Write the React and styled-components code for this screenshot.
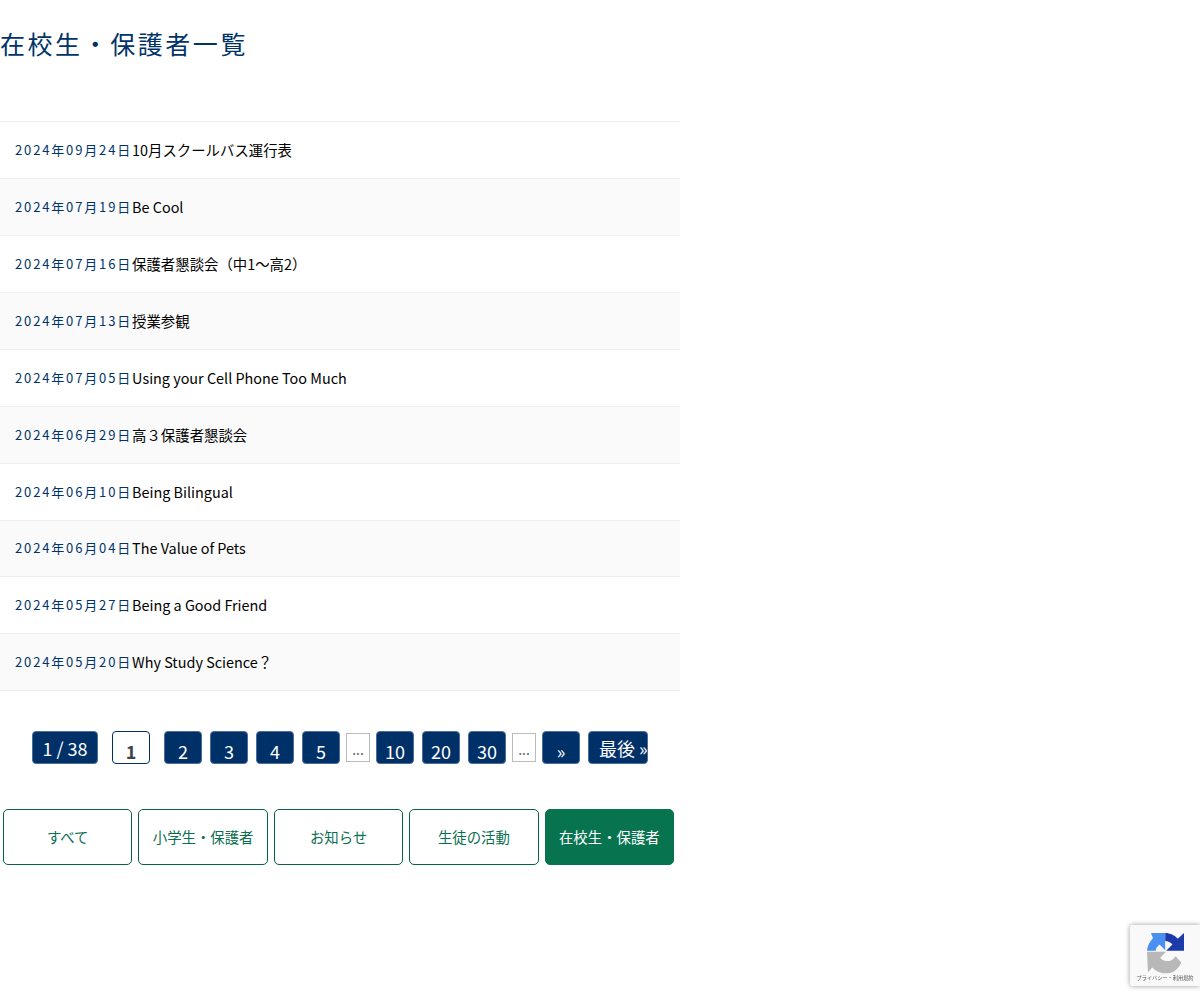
import React from "react";
import styled, { createGlobalStyle } from "styled-components";

const GlobalStyle = createGlobalStyle`
  html, body {
    margin: 0;
    padding: 0;
    background: #fff;
    font-family: "Noto Sans CJK JP", "Noto Sans", sans-serif;
    color: #000;
  }
`

const Main = styled.main`
  width: 680px;
  height: 1000px;
`

const Title = styled.h1`
  margin: 0;
  padding-top: 24px;
  height: 121.3px;
  box-sizing: border-box;
  font-size: 25px;
  line-height: 38px;
  font-weight: 400;
  letter-spacing: 2.55px;
  color: #003468;
  white-space: nowrap;
`

const List = styled.ul`
  margin: 0;
  padding: 0;
  list-style: none;
  border-top: 1px solid #eee;
`

const Row = styled.li`
  display: flex;
  align-items: center;
  height: 55.9px;
  box-sizing: content-box;
  padding-left: 15px;
  border-bottom: 1px solid #eee;
  background: ${props => (props.$alt ? "#fafafa" : "#fff")};
`

const RowDate = styled.span`
  margin-top: -1px;
  font-size: 13px;
  letter-spacing: 1.85px;
  color: #003468;
  white-space: nowrap;
`

const RowTitle = styled.a`
  margin-top: -1px;
  font-size: 14.4px;
  color: #000;
  white-space: nowrap;
`

const Pager = styled.nav`
  display: flex;
  justify-content: center;
  align-items: center;
  gap: 8px;
  margin-top: 39.7px;
  height: 34px;
`

const PageBox = styled.a`
  display: flex;
  justify-content: ${props => (props.$start ? "flex-start" : "center")};
  box-sizing: border-box;
  width: ${props => props.$width || 38}px;
  height: 33px;
  padding-top: ${props => (props.$raised ? 0 : 3)}px;
  padding-left: ${props => (props.$start ? 10 : 0)}px;
  font-size: 18px;
  line-height: 33px;
  color: #fff;
  background: #003068;
  border: 1px solid #4d6f97;
  border-radius: 4px;
  white-space: nowrap;
  overflow: hidden;
`

const Summary = styled(PageBox)`
  line-height: 32px;
`

const Current = styled(PageBox)`
  margin: 0 6px;
  color: #444;
  font-weight: 700;
  background: #fff;
  border-color: #003068;
`

const Dots = styled.span`
  display: flex;
  justify-content: center;
  box-sizing: border-box;
  width: 24px;
  height: 29px;
  margin: 0 -2px;
  font-size: 14px;
  line-height: 31px;
  color: #666;
  border: 1px solid #bbb;
`

const Tabs = styled.div`
  display: flex;
  gap: 6px;
  margin-top: 44px;
  padding: 0 6px 0 3px;
`

const Tab = styled.a`
  flex: 1;
  display: flex;
  justify-content: center;
  align-items: center;
  height: 56px;
  box-sizing: border-box;
  padding-bottom: 1px;
  font-size: 14.4px;
  color: ${props => (props.$active ? "#fff" : "#0a6e50")};
  background: ${props => (props.$active ? "#08734f" : "#fff")};
  border: 1px solid ${props => (props.$active ? "#08734f" : "#08604a")};
  border-radius: 5px;
  white-space: nowrap;
`

const Badge = styled.div`
  position: fixed;
  right: 0;
  top: 925px;
  width: 70px;
  height: 61px;
  box-sizing: border-box;
  padding-top: 7px;
  display: flex;
  flex-direction: column;
  align-items: center;
  background: #f9f9f9;
  border-radius: 2px 0 0 2px;
  box-shadow: 0 0 5px rgba(128, 128, 128, 0.8);
`

const BadgeText = styled.span`
  margin-top: -1px;
  font-size: 5.2px;
  line-height: 8px;
  color: #555;
  white-space: nowrap;
`

const posts = [
  ["2024年09月24日", "10月スクールバス運行表"],
  ["2024年07月19日", "Be Cool"],
  ["2024年07月16日", "保護者懇談会（中1〜高2）"],
  ["2024年07月13日", "授業参観"],
  ["2024年07月05日", "Using your Cell Phone Too Much"],
  ["2024年06月29日", "高３保護者懇談会"],
  ["2024年06月10日", "Being Bilingual"],
  ["2024年06月04日", "The Value of Pets"],
  ["2024年05月27日", "Being a Good Friend"],
  ["2024年05月20日", "Why Study Science？"],
]

const tabs = ["すべて", "小学生・保護者", "お知らせ", "生徒の活動", "在校生・保護者"]

function RecaptchaLogo() {
  return (
    <svg width="37" height="43" viewBox="0 0 112 130">
      <path fill="#1c3aa9" d="M55 3C70 3 84 10 93 20L112 3V57H58L77 38C71 31 64 27 55 27Z" />
      <path fill="#4a90f2" d="M12 3H55V55L38 38C31 44 27 50 26 57H0C1 43 8 29 18 19Z" />
      <path fill="#b8b8b8" d="M0 60H58L40 78C46 85 52 88 60 88C72 88 80 83 86 73L104 92C93 115 78 125 58 125C40 125 26 118 16 107L3 122Z" />
    </svg>
  )
}

export default function App() {
  return (
    <>
      <GlobalStyle />
      <Main>
        <Title>在校生・保護者一覧</Title>
        <List>
          {posts.map(([date, title], index) => (
            <Row key={date} $alt={index % 2 === 1}>
              <RowDate>{date}</RowDate>
              <RowTitle>{title}</RowTitle>
            </Row>
          ))}
        </List>
        <Pager>
          <Summary $width={66} $raised>1 / 38</Summary>
          <Current>1</Current>
          <PageBox>2</PageBox>
          <PageBox>3</PageBox>
          <PageBox>4</PageBox>
          <PageBox>5</PageBox>
          <Dots>...</Dots>
          <PageBox>10</PageBox>
          <PageBox>20</PageBox>
          <PageBox>30</PageBox>
          <Dots>...</Dots>
          <PageBox>»</PageBox>
          <Summary $width={60} $raised $start>最後 »</Summary>
        </Pager>
        <Tabs>
          {tabs.map((tab, index) => (
            <Tab key={tab} $active={index === 4}>{tab}</Tab>
          ))}
        </Tabs>
      </Main>
      <Badge>
        <RecaptchaLogo />
        <BadgeText>プライバシー・利用規約</BadgeText>
      </Badge>
    </>
  )
}
